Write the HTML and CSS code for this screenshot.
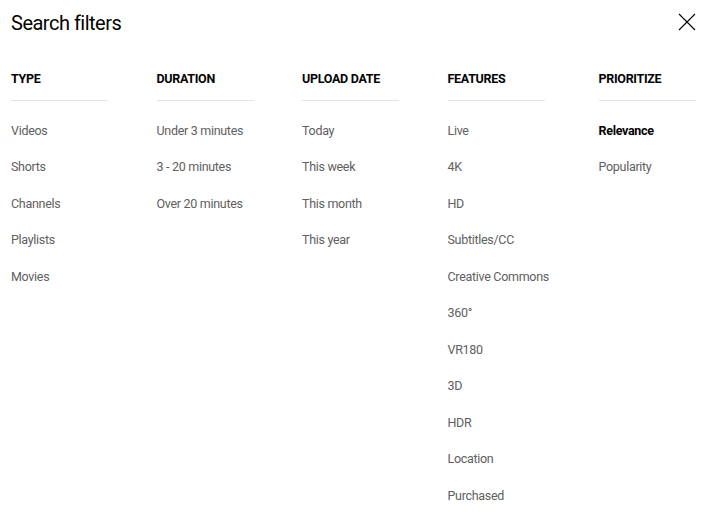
FILE: index.html
```html
<!DOCTYPE html>
<html>
<head>
<meta charset="utf-8">
<link rel="stylesheet" href="styles.css">
</head>
<body>
<div class="dialog">
  <div class="top">
    <h1 class="title">Search filters</h1>
    <button class="close" aria-label="Close">
      <svg width="24" height="24" viewBox="0 0 24 24"><path d="M4 4 L20 20 M20 4 L4 20" stroke="#030303" stroke-width="1.1" fill="none"/></svg>
    </button>
  </div>
  <div class="groups">
    <div class="group">
      <div class="head">TYPE</div>
      <div class="rule"></div>
      <div class="item">Videos</div>
      <div class="item">Shorts</div>
      <div class="item">Channels</div>
      <div class="item">Playlists</div>
      <div class="item">Movies</div>
    </div>
    <div class="group">
      <div class="head">DURATION</div>
      <div class="rule"></div>
      <div class="item">Under 3 minutes</div>
      <div class="item">3 - 20 minutes</div>
      <div class="item">Over 20 minutes</div>
    </div>
    <div class="group">
      <div class="head">UPLOAD DATE</div>
      <div class="rule"></div>
      <div class="item">Today</div>
      <div class="item">This week</div>
      <div class="item">This month</div>
      <div class="item">This year</div>
    </div>
    <div class="group">
      <div class="head">FEATURES</div>
      <div class="rule"></div>
      <div class="item">Live</div>
      <div class="item">4K</div>
      <div class="item">HD</div>
      <div class="item">Subtitles/CC</div>
      <div class="item">Creative Commons</div>
      <div class="item">360°</div>
      <div class="item">VR180</div>
      <div class="item">3D</div>
      <div class="item">HDR</div>
      <div class="item">Location</div>
      <div class="item">Purchased</div>
    </div>
    <div class="group">
      <div class="head">PRIORITIZE</div>
      <div class="rule"></div>
      <div class="item selected">Relevance</div>
      <div class="item">Popularity</div>
    </div>
  </div>
</div>
</body>
</html>
```
FILE: styles.css
```css
html, body {
  margin: 0;
  padding: 0;
  background: #ffffff;
}
body {
  font-family: Roboto, "Liberation Sans", Arial, sans-serif;
  color: #030303;
  overflow: hidden;
}
.dialog {
  padding: 9px 0 0 11px;
}
.top {
  display: flex;
  justify-content: space-between;
  align-items: flex-start;
  height: 59px;
}
.title {
  margin: 0;
  font-size: 20px;
  line-height: 28px;
  font-weight: 400;
  letter-spacing: -0.5px;
  color: #030303;
}
.close {
  margin: 1px 11px 0 0;
  padding: 0;
  border: 0;
  background: none;
  width: 24px;
  height: 24px;
  display: block;
}
.close svg {
  display: block;
}
.groups {
  display: grid;
  grid-template-columns: 145.5px 145.5px 145.5px 151px 100px;
}
.head {
  font-size: 12.5px;
  line-height: 21px;
  font-weight: 700;
  letter-spacing: -0.3px;
  color: #030303;
}
.rule {
  width: 97px;
  height: 1px;
  background: #e5e5e5;
  margin: 11px 0 11.5px 0;
}
.item {
  font-size: 12.5px;
  line-height: 36.5px;
  height: 36.5px;
  letter-spacing: -0.3px;
  color: #606060;
  white-space: nowrap;
}
.item.selected {
  color: #030303;
  font-weight: 700;
}
```
